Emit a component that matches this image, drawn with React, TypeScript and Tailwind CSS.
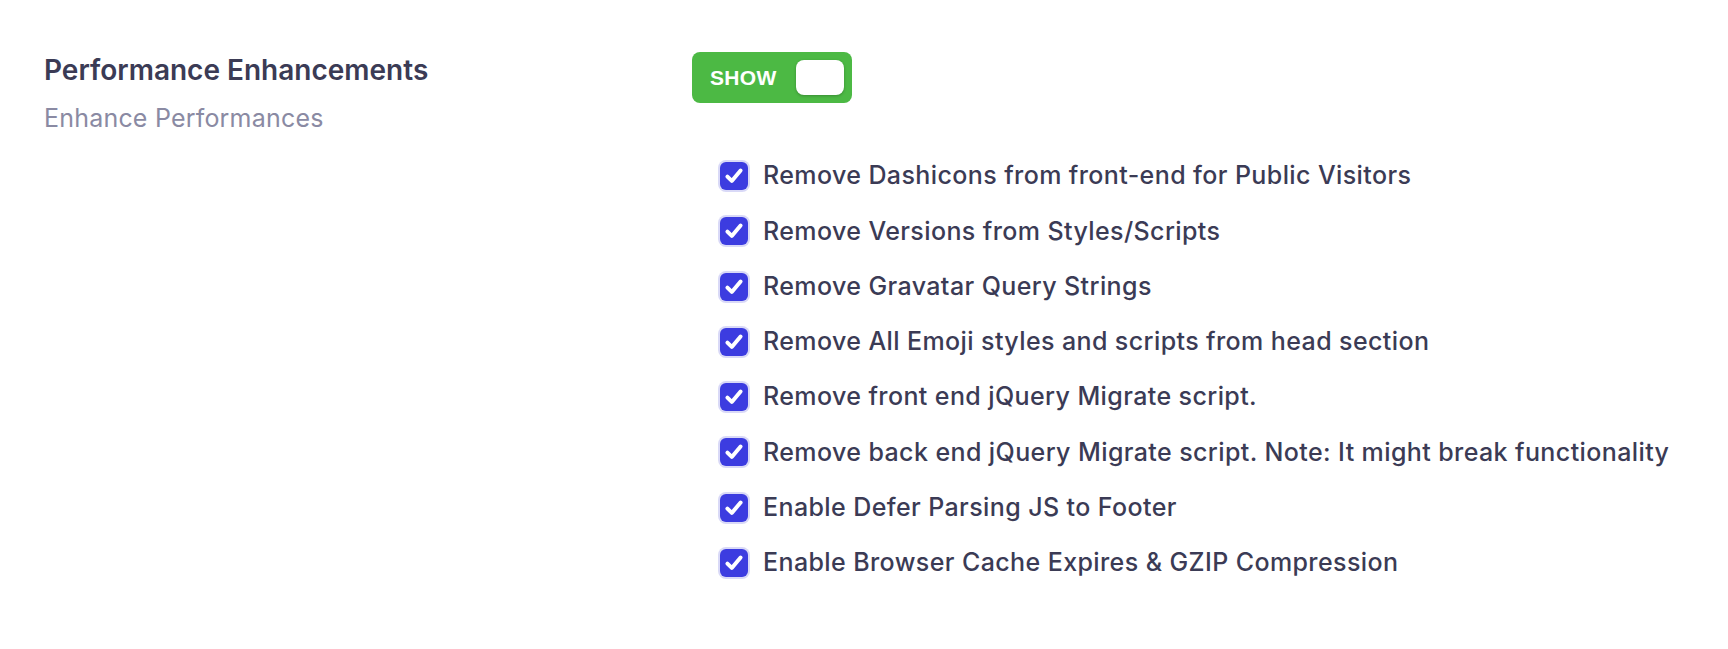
import React from "react";

const items = [
  "Remove Dashicons from front-end for Public Visitors",
  "Remove Versions from Styles/Scripts",
  "Remove Gravatar Query Strings",
  "Remove All Emoji styles and scripts from head section",
  "Remove front end jQuery Migrate script.",
  "Remove back end jQuery Migrate script. Note: It might break functionality",
  "Enable Defer Parsing JS to Footer",
  "Enable Browser Cache Expires & GZIP Compression",
];

function Check() {
  return (
    <span className="flex h-[28px] w-[28px] shrink-0 items-center justify-center rounded-[6px] bg-[#3c3ce0] ring-2 ring-[#d9d9f7]">
      <svg viewBox="0 0 20 20" className="h-[22px] w-[22px]" fill="none">
        <path d="M4 10.5 L8 14.5 L16 5" stroke="white" strokeWidth="3.6" strokeLinecap="round" strokeLinejoin="round" />
      </svg>
    </span>
  );
}

export default function App() {
  return (
    <div className="min-h-[649px] bg-white font-['Inter',sans-serif]">
      <div className="flex pl-[44px] pt-[53px]">
        <div className="w-[648px] shrink-0">
          <div className="whitespace-nowrap text-[28px] font-semibold leading-[34px] text-[#3b3b55]">Performance Enhancements</div>
          <div className="mt-[16px] whitespace-nowrap text-[25px] leading-[30px] tracking-[0.2px] text-[#8a8aa3]">Enhance Performances</div>
        </div>
        <div className="-mt-[1px]">
          <div className="flex h-[51px] w-[160px] items-center justify-between rounded-[8px] bg-[#4cb944] pl-[18px] pr-[8px]">
            <span className="font-['Liberation_Sans',sans-serif] text-[21px] font-bold tracking-[0.3px] text-white">SHOW</span>
            <span className="h-[35px] w-[48px] rounded-[8px] bg-white shadow-[0_1px_3px_rgba(0,0,0,0.25)]" />
          </div>
          <div className="mt-[59px] flex flex-col gap-[27.3px] pl-[28px]">
            {items.map((t) => (
              <label key={t} className="flex h-[28px] items-center gap-[15px]">
                <Check />
                <span className="whitespace-nowrap text-[25px] font-medium tracking-[0.4px] text-[#3b3b55]">{t}</span>
              </label>
            ))}
          </div>
        </div>
      </div>
    </div>
  );
}
